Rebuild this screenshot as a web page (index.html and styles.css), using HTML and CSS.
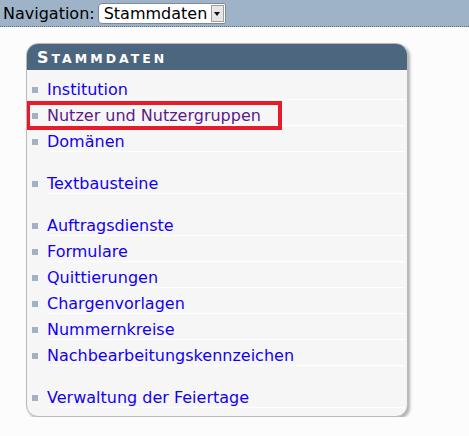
FILE: index.html
```html
<!DOCTYPE html>
<html lang="de">
  <head>
    <meta charset="UTF-8" />
    <title>Stammdaten</title>
    <link rel="stylesheet" href="styles.css">
  </head>
  <body>
    <div class="navbar">
      <span class="nav-label">Navigation:</span>
      <div class="nav-select">
        <span class="nav-value">Stammdaten</span>
        <span class="nav-arrow"></span>
      </div>
    </div>

    <div class="panel">
      <div class="panel-title">S<span class="small">tammdaten</span></div>
      <ul class="menu">
        <li><a href="#">Institution</a></li>
        <li class="marked"><a href="#" class="visited">Nutzer und Nutzergruppen</a><span class="highlight"></span></li>
        <li><a href="#">Domänen</a></li>
        <li class="gap"></li>
        <li><a href="#">Textbausteine</a></li>
        <li class="gap"></li>
        <li><a href="#">Auftragsdienste</a></li>
        <li><a href="#">Formulare</a></li>
        <li><a href="#">Quittierungen</a></li>
        <li><a href="#">Chargenvorlagen</a></li>
        <li><a href="#">Nummernkreise</a></li>
        <li><a href="#">Nachbearbeitungskennzeichen</a></li>
        <li class="gap"></li>
        <li><a href="#">Verwaltung der Feiertage</a></li>
      </ul>
    </div>
  </body>
</html>
```

FILE: styles.css
```css
body {
  font-family: "DejaVu Sans", Verdana, sans-serif;
  margin: 0;
  padding: 0;
  background-color: #fcfcfc;
}

/* top bar */

.navbar {
  display: flex;
  align-items: center;
  height: 26px;
  padding-left: 3px;
  background-color: #9eb3c8;
  border-bottom: 1px dotted #5c6c7c;
  font-size: 16px;
  color: #000;
}

.nav-select {
  display: flex;
  align-items: center;
  height: 21px;
  box-sizing: border-box;
  margin-left: 3px;
  padding: 0 1px 0 5px;
  background-color: #fff;
  border: 1px solid #7d8b99;
  border-radius: 4px 2px 2px 4px;
}

.nav-value {
  line-height: 19px;
}

.nav-arrow {
  position: relative;
  width: 13px;
  height: 17px;
  box-sizing: border-box;
  margin-left: 4px;
  background-color: #e6e6e6;
  border: 1px solid #a0a0a0;
}

.nav-arrow::after {
  content: "";
  position: absolute;
  left: 2px;
  top: 6px;
  border-left: 3.5px solid transparent;
  border-right: 3.5px solid transparent;
  border-top: 4px solid #111;
}

/* panel */

.panel {
  width: 382px;
  box-sizing: border-box;
  margin: 16px 0 0 26px;
  background-color: #f6f6f6;
  border: 1px solid #b9b9b9;
  border-radius: 12px;
  box-shadow: 2px 2px 3px rgba(0, 0, 0, 0.3);
  overflow: hidden;
}

.panel-title {
  height: 26px;
  box-sizing: border-box;
  padding: 2px 0 0 10px;
  line-height: 24px;
  background-color: #4d6680;
  color: #fff;
  font-size: 16px;
  font-weight: bold;
  letter-spacing: 3px;
}

.panel-title .small {
  font-size: 12.5px;
  text-transform: uppercase;
}

.menu {
  list-style-type: none;
  margin: 0;
  padding: 4px 0 8px 0;
}

.menu li {
  position: relative;
  display: flex;
  align-items: flex-start;
}

.menu li::before {
  content: "";
  flex: none;
  width: 6px;
  height: 6px;
  margin: 13px 9px 0 5px;
  background-color: #a2b2c3;
}

.menu li.gap {
  height: 16px;
}

.menu li.gap::before {
  display: none;
}

.menu a {
  flex: 1;
  margin-right: 2px;
  padding-top: 6px;
  line-height: 19px;
  border-bottom: 1px solid #fff;
  color: #1400f0;
  font-size: 16px;
  text-decoration: none;
}

.menu a.visited {
  color: #5a1a8c;
}

.highlight {
  position: absolute;
  top: 1px;
  left: -1px;
  width: 256px;
  height: 29px;
  box-sizing: border-box;
  border: 4px solid #e81c28;
}
```
